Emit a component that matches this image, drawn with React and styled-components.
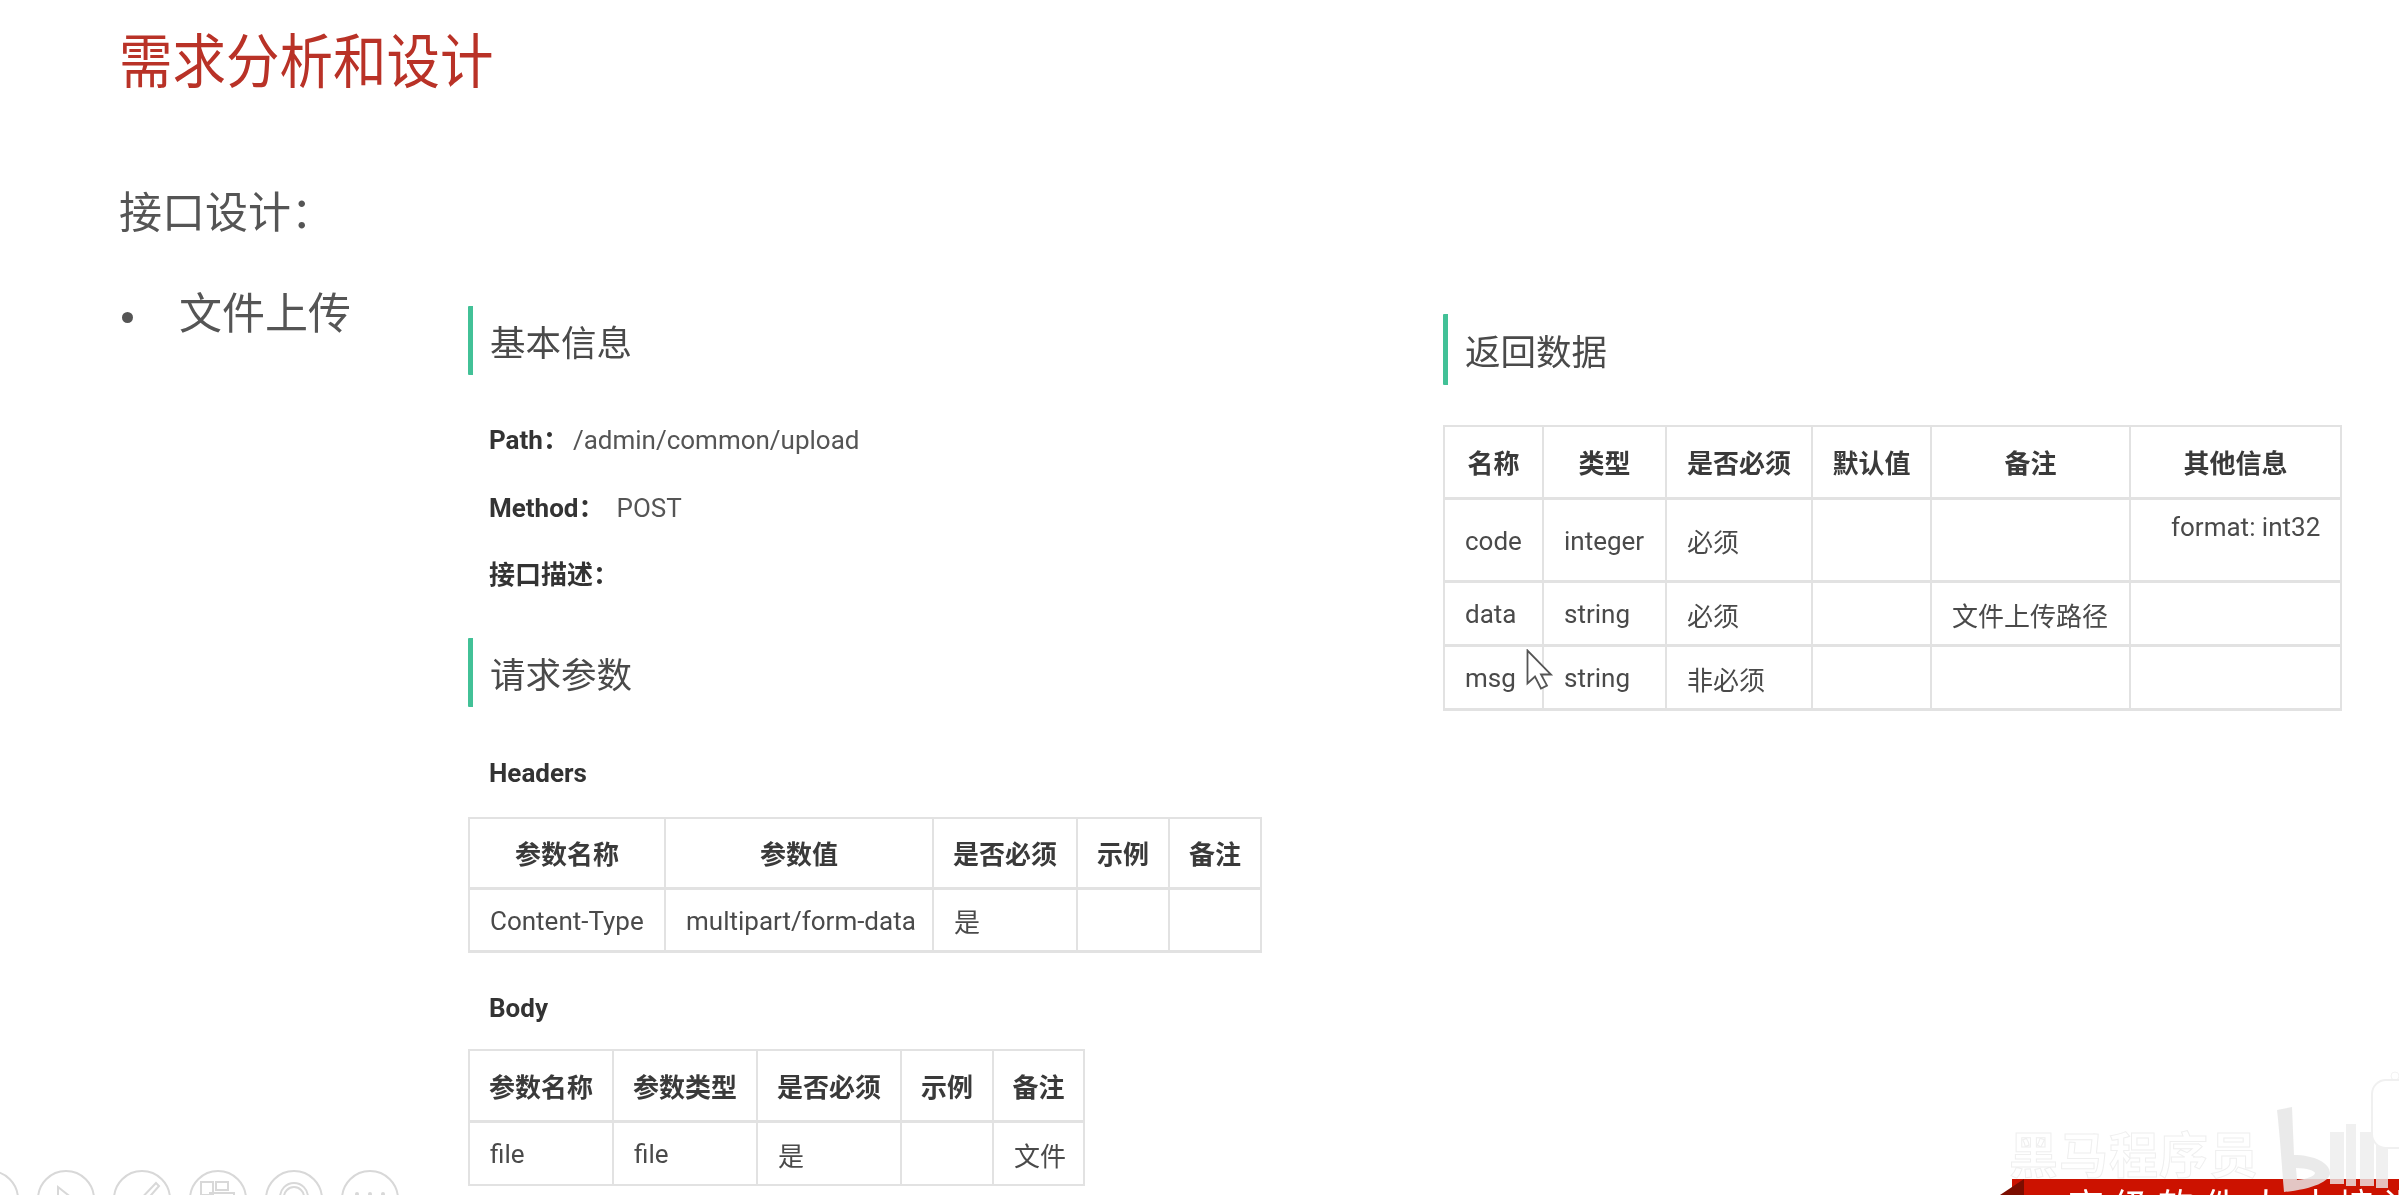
import React from 'react';
import styled, { createGlobalStyle } from 'styled-components';

const GlobalStyle = createGlobalStyle`
  html, body {
    margin: 0;
    padding: 0;
    background: #fff;
  }
`;

const FONT = `Roboto, "Noto Sans CJK SC", sans-serif`;

const Slide = styled.div`
  position: relative;
  width: 2399px;
  height: 1195px;
  overflow: hidden;
  background: #fff;
  font-family: ${FONT};
  padding: 34px 0 0 119px;
  box-sizing: border-box;
  filter: blur(0.45px);
`;

const Title = styled.h1`
  margin: 0;
  font-size: 53.5px;
  line-height: 58px;
  font-weight: 400;
  color: #b93227;
  transform: scaleY(1.1);
`;

const SubTitle = styled.h2`
  margin: 92px 0 0;
  font-size: 43px;
  line-height: 58px;
  font-weight: 400;
  color: #555;
`;

const Columns = styled.div`
  display: flex;
  align-items: flex-start;
`;

const BulletCol = styled.div`
  width: 349px;
  flex: none;
  display: flex;
  margin-top: 43px;
  font-size: 43px;
  line-height: 58px;
  color: #555;
`;

const Dot = styled.span`
  width: 60px;
  flex: none;
  &::before {
    content: '';
    display: inline-block;
    width: 11px;
    height: 11px;
    border-radius: 50%;
    background: #555;
    vertical-align: middle;
    margin-left: 3px;
  }
`;

const DocCol = styled.div`
  width: 793px;
  flex: none;
  margin-top: 64px;
`;

const RightCol = styled.div`
  width: 897px;
  flex: none;
  margin-left: 182px;
  margin-top: 72px;
`;

const SectionHead = styled.h3`
  margin: ${(p) => p.$top || 0}px 0 0;
  height: ${(p) => p.$h || 69}px;
  box-sizing: border-box;
  border-left: 5px solid #42c197;
  padding-left: 17px;
  border-radius: 1px;
  display: flex;
  align-items: center;
  font-size: 35.5px;
  font-weight: 400;
  color: #4a4a4a;
`;

const MetaRow = styled.p`
  margin: ${(p) => p.$top}px 0 0 21px;
  font-size: 26px;
  line-height: 34px;
  color: #555;
  display: flex;
`;

const Label = styled.b`
  font-weight: 700;
  color: #333;
  margin-right: ${(p) => p.$gap || 0}px;
`;

const Table = styled.table`
  border-collapse: collapse;
  table-layout: fixed;
  width: ${(p) => p.$w}px;
  margin-top: ${(p) => p.$top}px;
  font-size: 26px;
  color: #4a4a4a;
  td {
    border-bottom-width: ${(p) => (p.$thick ? 3 : 2)}px;
  }
`;

const Col = styled.col`
  width: ${(p) => p.$w}px;
`;

const Th = styled.th`
  border: 2px solid #e2e2e2;
  border-bottom-width: 3px;
  box-sizing: border-box;
  font-weight: 700;
  color: #3a3a3a;
  height: ${(p) => p.$h}px;
  padding: 0;
  text-align: center;
  white-space: nowrap;
`;

const Td = styled.td`
  border: 2px solid #e2e2e2;
  box-sizing: border-box;
  height: ${(p) => p.$h}px;
  padding: ${(p) => (p.$top ? '12px 0 0 40px' : '2px 0 0 20px')};
  vertical-align: ${(p) => (p.$top ? 'top' : 'middle')};
  white-space: nowrap;
`;

const CursorMark = styled.svg`
  position: absolute;
  left: 1526px;
  top: 649px;
`;

const Controls = styled.div`
  position: absolute;
  left: -39px;
  top: 1170px;
  display: flex;
  gap: 18px;
`;

const ControlBtn = styled.div`
  position: relative;
  width: 58px;
  height: 58px;
  box-sizing: border-box;
  border: 2px solid #d8d8d8;
  border-radius: 50%;
  svg {
    position: absolute;
    left: 8px;
    top: 8px;
  }
`;

const Watermark = styled.div`
  position: absolute;
  left: 2009px;
  top: 1122px;
  font-size: 49px;
  line-height: 60px;
  font-weight: 700;
  color: #fff;
  letter-spacing: 1px;
  -webkit-text-stroke: 1px #efefef;
  font-family: "Noto Sans CJK SC", sans-serif;
`;

const BiliMark = styled.svg`
  position: absolute;
  left: 2270px;
  top: 1070px;
`;

const Banner = styled.div`
  position: absolute;
  left: 2012px;
  top: 1179px;
  width: 387px;
  height: 30px;
  background: #cc1200;
  color: #fff;
  font-family: "Noto Sans CJK SC", serif;
  font-size: 36px;
  line-height: 50px;
  letter-spacing: 9px;
  padding-left: 56px;
  box-sizing: border-box;
  white-space: nowrap;
  &::before {
    content: '';
    position: absolute;
    left: -12px;
    top: 0;
    border-style: solid;
    border-width: 0 0 16px 24px;
    border-color: transparent transparent #7c0d00 transparent;
  }
`;

const headCols = [196, 268, 144, 92, 92];
const bodyCols = [144, 144, 144, 92, 91];
const backCols = [99, 123, 146, 119, 199, 211];

const Cols = ({ widths }) => (
  <colgroup>
    {widths.map((w, i) => (
      <Col key={i} $w={w} />
    ))}
  </colgroup>
);

const iconLine = { fill: 'none', stroke: '#d8d8d8', strokeWidth: 2 };

const icons = [
  <svg width="40" height="40" key="a" />,
  <svg width="40" height="40" viewBox="0 0 40 40" key="b"><path d="M11 7l24 19H11z" {...iconLine} /></svg>,
  <svg width="40" height="40" viewBox="0 0 40 40" key="c"><path d="M33 3l3 3L15 30l-6 3 2-7z" {...iconLine} /></svg>,
  <svg width="40" height="40" viewBox="0 0 40 40" key="d"><path d="M2 2h12v13H2zM17 2h12v8H17zM11 13h24v14H11z" {...iconLine} /></svg>,
  <svg width="40" height="40" viewBox="0 0 40 40" key="e"><path d="M5 30V17a14 14 0 0 1 28 0v13M9 30V17a10 10 0 0 1 20 0v13" {...iconLine} /></svg>,
  <svg width="40" height="40" viewBox="0 0 40 40" fill="#d8d8d8" key="f"><circle cx="6" cy="14" r="2" /><circle cx="19" cy="14" r="2" /><circle cx="32" cy="14" r="2" /></svg>,
];

export default function App() {
  return (
    <Slide>
      <GlobalStyle />
      <Title>需求分析和设计</Title>
      <SubTitle>接口设计：</SubTitle>
      <Columns>
        <BulletCol>
          <Dot />
          <span>文件上传</span>
        </BulletCol>
        <DocCol>
          <SectionHead>基本信息</SectionHead>
          <MetaRow $top={48}><Label $gap={4}>Path：</Label>/admin/common/upload</MetaRow>
          <MetaRow $top={34}><Label $gap={12}>Method：</Label>POST</MetaRow>
          <MetaRow $top={33}><Label>接口描述：</Label></MetaRow>
          <SectionHead $top={46}>请求参数</SectionHead>
          <MetaRow $top={49}><Label>Headers</Label></MetaRow>
          <Table $w={792} $top={27} $thick>
            <Cols widths={headCols} />
            <thead>
              <tr>
                <Th $h={70}>参数名称</Th>
                <Th $h={70}>参数值</Th>
                <Th $h={70}>是否必须</Th>
                <Th $h={70}>示例</Th>
                <Th $h={70}>备注</Th>
              </tr>
            </thead>
            <tbody>
              <tr>
                <Td $h={63}>Content-Type</Td>
                <Td $h={63}>multipart/form-data</Td>
                <Td $h={63}>是</Td>
                <Td $h={63} />
                <Td $h={63} />
              </tr>
            </tbody>
          </Table>
          <MetaRow $top={38}><Label>Body</Label></MetaRow>
          <Table $w={615} $top={24}>
            <Cols widths={bodyCols} />
            <thead>
              <tr>
                <Th $h={72}>参数名称</Th>
                <Th $h={72}>参数类型</Th>
                <Th $h={72}>是否必须</Th>
                <Th $h={72}>示例</Th>
                <Th $h={72}>备注</Th>
              </tr>
            </thead>
            <tbody>
              <tr>
                <Td $h={63}>file</Td>
                <Td $h={63}>file</Td>
                <Td $h={63}>是</Td>
                <Td $h={63} />
                <Td $h={63}>文件</Td>
              </tr>
            </tbody>
          </Table>
        </DocCol>
        <RightCol>
          <SectionHead $h={71}>返回数据</SectionHead>
          <Table $w={897} $top={40} $thick>
            <Cols widths={backCols} />
            <thead>
              <tr>
                <Th $h={72}>名称</Th>
                <Th $h={72}>类型</Th>
                <Th $h={72}>是否必须</Th>
                <Th $h={72}>默认值</Th>
                <Th $h={72}>备注</Th>
                <Th $h={72}>其他信息</Th>
              </tr>
            </thead>
            <tbody>
              <tr>
                <Td $h={83}>code</Td>
                <Td $h={83}>integer</Td>
                <Td $h={83}>必须</Td>
                <Td $h={83} />
                <Td $h={83} />
                <Td $h={83} $top>format: int32</Td>
              </tr>
              <tr>
                <Td $h={64}>data</Td>
                <Td $h={64}>string</Td>
                <Td $h={64}>必须</Td>
                <Td $h={64} />
                <Td $h={64}>文件上传路径</Td>
                <Td $h={64} />
              </tr>
              <tr>
                <Td $h={64}>msg</Td>
                <Td $h={64}>string</Td>
                <Td $h={64}>非必须</Td>
                <Td $h={64} />
                <Td $h={64} />
                <Td $h={64} />
              </tr>
            </tbody>
          </Table>
        </RightCol>
      </Columns>

      <CursorMark width="28" height="44" viewBox="0 0 28 44">
        <path d="M1.5 1.5v33l7.5-7 6 12 6-3-6-11h10z" fill="#fff" stroke="#555" strokeWidth="1.8" />
      </CursorMark>

      <Controls>
        {icons.map((icon, i) => (
          <ControlBtn key={i}>{icon}</ControlBtn>
        ))}
      </Controls>

      <Watermark>黑马程序员</Watermark>
      <Banner>高级软件人才培训专家</Banner>
      <BiliMark width="129" height="125" viewBox="0 0 129 125">
        <path fillRule="evenodd" d="M7 40l15-3 2 48c20 0 36 8 36 18 0 8-16 16-46 19-2-25-4-55-7-82zM26 98l1 12c10-1 18-4 18-7 0-2-8-5-19-5z" fill="#e6e6e6" fillOpacity="0.85" />
        <path d="M60 62h14v52H60zM76 54h10v62H76zM90 62h14v54H90zM106 70h12v48h-12z" fill="#ececec" fillOpacity="0.8" />
        <circle cx="125" cy="6" r="4" fill="#fff" stroke="#f3f3f3" />
        <rect x="102" y="10" width="50" height="68" rx="14" fill="#fff" stroke="#f0f0f0" strokeWidth="2" />
      </BiliMark>
    </Slide>
  );
}
